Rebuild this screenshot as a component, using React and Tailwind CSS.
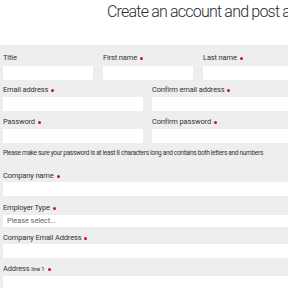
import React from 'react'

const Req = () => (
  <span className="inline-block w-[3px] h-[3px] rounded-full bg-[#c8102e] ml-[3px] align-middle" />
)

const Label = ({ children, req }) => (
  <div className="h-[12px] leading-[12px] text-[7.5px] tracking-[-0.15px] text-[#333] whitespace-nowrap">
    {children}
    {req && <Req />}
  </div>
)

const Input = () => <div className="h-[14px] bg-white" />

export default function App() {
  return (
    <div className="w-[288px] h-[288px] overflow-hidden bg-white" style={{ fontFamily: 'Roboto, "Open Sans", sans-serif' }}>
      {/* heading */}
      <div className="h-[45px] pl-[107px] pt-[1px] whitespace-nowrap">
        <h1 className="text-[16px] leading-[22px] font-light text-[#2b2b2b] tracking-[-0.8px]">
          Create an account and post a job
        </h1>
      </div>

      {/* form panel */}
      <div className="bg-[#eeeeee] pl-[3px] pt-[7px] w-[300px]">
        <div className="grid grid-cols-[90px_90px_90px] gap-x-[10px]">
          <div>
            <Label>Title</Label>
            <div className="mt-[2px]"><Input /></div>
          </div>
          <div>
            <Label req>First name</Label>
            <div className="mt-[2px]"><Input /></div>
          </div>
          <div>
            <Label req>Last name</Label>
            <div className="mt-[2px]"><Input /></div>
          </div>
        </div>

        <div className="grid grid-cols-[140px_140px] gap-x-[9px] mt-[4px]">
          <div>
            <Label req>Email address</Label>
            <div className="mt-[1px]"><Input /></div>
          </div>
          <div>
            <Label req>Confirm email address</Label>
            <div className="mt-[1px]"><Input /></div>
          </div>
        </div>

        <div className="grid grid-cols-[140px_140px] gap-x-[9px] mt-[5px]">
          <div>
            <Label req>Password</Label>
            <div className="mt-[1px]"><Input /></div>
          </div>
          <div>
            <Label req>Confirm password</Label>
            <div className="mt-[1px]"><Input /></div>
          </div>
        </div>

        <p className="mt-[5px] h-[10px] leading-[10px] text-[6.5px] tracking-[-0.3px] text-[#333] whitespace-nowrap">
          Please make sure your password is at least 8 characters long and contains both letters and numbers
        </p>

        <div className="mt-[12px]">
          <Label req>Company name</Label>
          <Input />
        </div>

        <div className="mt-[6px]">
          <Label req>Employer Type</Label>
          <div className="mt-[1px] h-[12px] bg-white pl-[4px] leading-[12px] text-[7.5px] tracking-[-0.1px] text-[#666]">Please select...</div>
        </div>

        <div className="mt-[5px]">
          <Label req>Company Email Address</Label>
          <Input />
        </div>

        <div className="mt-[5px]">
          <Label req>
            Address <span className="text-[6px]">line 1</span>
          </Label>
          <div className="mt-[1px] h-[20px] bg-white" />
        </div>
      </div>
    </div>
  )
}
